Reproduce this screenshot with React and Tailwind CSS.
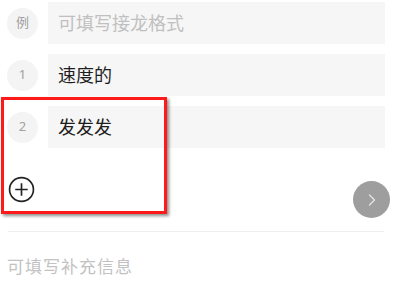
import { ChevronRight } from "lucide-react";

const rows = [
  { tag: "例", text: "可填写接龙格式", placeholder: true },
  { tag: "1", text: "速度的" },
  { tag: "2", text: "发发发" },
];

export default function App() {
  return (
    <div
      className="relative w-[400px] h-[300px] bg-white overflow-hidden"
      style={{ fontFamily: '"Noto Sans", "Noto Sans CJK SC", sans-serif' }}
    >
      <div className="flex flex-col gap-[10px] pt-[2px]">
        {rows.map((r) => (
          <div key={r.tag} className="flex items-center">
            <div className="ml-[7px] w-[31px] h-[31px] rounded-full bg-[#f4f4f4] flex items-center justify-center text-[13px] text-[#a0a0a0]">
              {r.tag}
            </div>
            <div
              className={
                "ml-[10px] mr-[15px] flex-1 h-[42px] bg-[#f6f6f6] flex items-center pl-[10px] text-[18px] " +
                (r.placeholder ? "text-[#c0c0c0]" : "text-[#1e1e1e]")
              }
            >
              {r.text}
            </div>
          </div>
        ))}
      </div>

      <div className="flex items-start justify-between h-[83px]">
        <svg
          className="ml-[8px] mt-[28px]"
          width="27"
          height="27"
          viewBox="0 0 26 26"
          fill="none"
          stroke="#222"
          strokeWidth="1.6"
        >
          <circle cx="13" cy="13" r="11.5" />
          <path d="M13 7v12M7 13h12" />
        </svg>
        <div className="mr-[10px] mt-[33px] w-[37px] h-[37px] rounded-full bg-[#9e9e9e] flex items-center justify-center">
          <ChevronRight size={20} color="#e6e6e6" strokeWidth={1.5} />
        </div>
      </div>

      <div className="mx-[8px] mr-[16px] h-px bg-[#eeeeee]" />

      <div className="pl-[7px] pt-[22px] text-[17px] tracking-[1px] text-[#c2c2c2]">
        可填写补充信息
      </div>

      <div className="absolute left-[1px] top-[97px] w-[166px] h-[117px] border-[3px] border-[#ff1a1a] shadow-[2px_2px_3px_rgba(0,0,0,0.45)]" />
    </div>
  );
}
